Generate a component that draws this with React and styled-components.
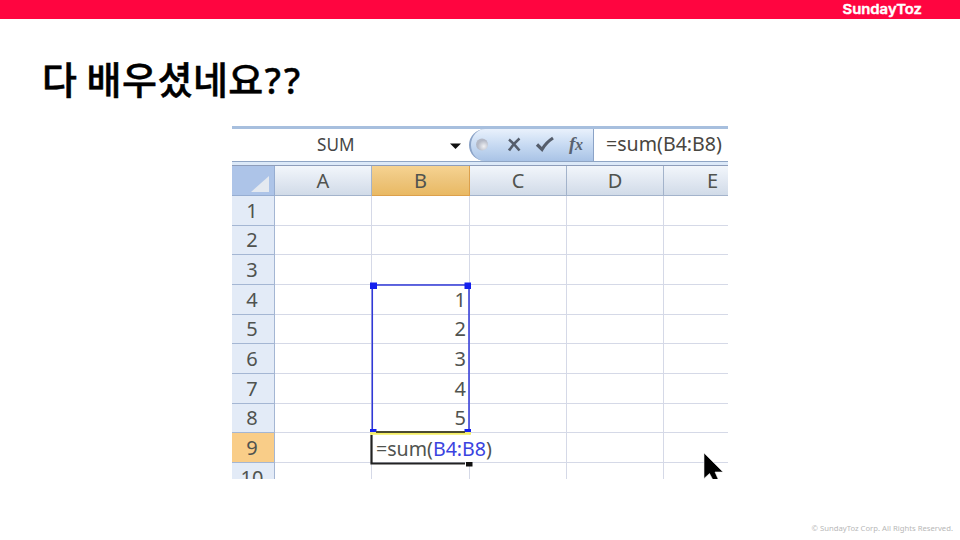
import React from "react";
import styled, { createGlobalStyle } from "styled-components";

const GlobalStyle = createGlobalStyle`
  * { box-sizing: border-box; }
  body { margin: 0; background: #fff; }
`;

const Slide = styled.main`
  width: 960px;
  height: 540px;
  overflow: hidden;
  display: flex;
  flex-direction: column;
  background: #fff;
  font-family: "Noto Sans", "Noto Sans CJK KR", sans-serif;
`;

const Banner = styled.header`
  flex: none;
  height: 19px;
  background: #ff0540;
  display: flex;
  justify-content: flex-end;
  padding-right: 36px;
`;

const Title = styled.h1`
  flex: none;
  margin: 0;
  height: 107px;
  padding: 31px 0 0 42px;
  font: 500 38px/56px "Noto Sans CJK KR", sans-serif;
  color: #000;
  white-space: pre;
`;

const Hangul = styled.span`
  letter-spacing: 0.5px;
  -webkit-text-stroke: 0.5px #000;
`;

const Marks = styled.span`
  font: 500 36px/56px "Noto Sans", sans-serif;
  letter-spacing: 3px;
  margin-left: 1px;
  -webkit-text-stroke: 0.5px #000;
`;

const Figure = styled.section`
  flex: none;
  width: 496px;
  height: 353px;
  margin-left: 232px;
  overflow: hidden;
  position: relative;
  color: #50534f;
`;

const FormulaBar = styled.div`
  display: flex;
  height: 36px;
  border-top: 3px solid #a7bfde;
  border-bottom: 1px solid #8fa5c4;
  background: #fff;
`;

const NameBox = styled.div`
  width: 237px;
  display: flex;
  align-items: center;
  justify-content: space-between;
  padding: 0 8px 3px 85px;
  font-size: 18px;
  color: #454545;
`;

const Arrow = styled.svg`
  margin-top: 4px;
`;

const Buttons = styled.div`
  width: 125px;
  border: 1px solid #8ba3c7;
  border-width: 0 1px 0 2px;
  border-radius: 16px 0 0 16px;
  background: linear-gradient(#e9f1fc, #c7daf2 50%, #a9c3e6);
`;

const Formula = styled.div`
  padding-left: 12px;
  font-size: 19.5px;
  line-height: 30px;
  color: #48453f;
  white-space: nowrap;
`;

const Fit = styled.span`
  display: inline-block;
  transform-origin: 0 50%;
  transform: scaleX(${(p) => p.$x});
`;

const Divider = styled.div`
  height: 4px;
  background: #dce9f8;
  border-bottom: 1px solid #8e9dba;
`;

const Sheet = styled.div`
  display: grid;
  grid-template-columns: 43px 97px 98px 97px 97px 98px;
  grid-template-rows: 30px 30px 29px 30px 30px 29px 30px 30px 29px 30px 30px;
`;

const Cell = styled.div`
  border-right: 1px solid #d5d9e7;
  border-bottom: 1px solid #d5d9e7;
  display: flex;
  align-items: center;
  justify-content: flex-end;
  padding: 0 3px 0 0;
  font-size: 20px;
  line-height: 28px;
  white-space: nowrap;
`;

const ColumnHead = styled(Cell)`
  justify-content: center;
  padding: 1px 0 0;
  font-size: 20px;
  border-color: ${(p) => (p.$active ? "#dca04c" : "#a3b3cb")};
  background: ${(p) =>
    p.$active
      ? "linear-gradient(#f6d391, #eec67e 45%, #e9b963)"
      : "linear-gradient(#f2f6fb, #e0e7f1 55%, #d1dbe8)"};
`;

const RowHead = styled(Cell)`
  justify-content: center;
  padding: 0 2px 0 0;
  border-color: #a4b6d3;
  background: ${(p) => (p.$active ? "#f9cd88" : "#e3ebf7")};
`;

const Corner = styled(Cell)`
  padding: 0 5px 3px 0;
  align-items: flex-end;
  background: #adc4e8;
  border-color: #96add1;
`;

const RangeBox = styled.svg`
  position: absolute;
  left: 0;
  top: 0;
  pointer-events: none;
`;

const Editing = styled.div`
  position: absolute;
  left: 141px;
  top: 309px;
  width: 122px;
  padding-left: 3px;
  background: #fff;
  font-size: 19.5px;
  line-height: 27px;
  white-space: nowrap;
`;

const Ref = styled.span`
  color: #3a42e0;
`;

const Copyright = styled.footer`
  flex: none;
  height: 61px;
  padding: 44px 7px 0 0;
  text-align: right;
  font-size: 7.7px;
  line-height: 11px;
  color: #b8b8b8;
`;

const Logo = () => (
  <svg width="84" height="19" role="img" aria-label="SundayToz">
    <text
      x="2.500" y="14" textLength="79.500" lengthAdjust="spacingAndGlyphs"
      fontFamily="Inter, sans-serif" fontWeight="600" fontSize="13.500"
      fill="#fff" stroke="#fff" strokeWidth="0.400" strokeLinejoin="round"
    >
      SundayToz
    </text>
  </svg>
);

const FormulaIcons = () => (
  <svg width="122" height="32" viewBox="471 129 122 32">
    <defs>
      <radialGradient id="knob" cx="65%" cy="65%">
        <stop offset="0" stopColor="#f0f1f4" />
        <stop offset="1" stopColor="#b4b9c6" />
      </radialGradient>
    </defs>
    <circle cx="482" cy="144.5" r="6" fill="url(#knob)" />
    <path d="M509 139.500q5 4 10.500 11M519.500 138.500q-6 5-10.500 12" fill="none" stroke="#555d6b" strokeWidth="2.600" />
    <path d="M537 144.500l5 5q4-7 11-11.500" fill="none" stroke="#555d6b" strokeWidth="3.200" />
    <text x="569" y="149.500" fontFamily="Liberation Serif, serif" fontStyle="italic" fontWeight="700" fontSize="19" fill="#5a6270">f</text>
    <text x="575" y="150" fontFamily="Liberation Serif, serif" fontStyle="italic" fontWeight="700" fontSize="16" fill="#5a6270">x</text>
  </svg>
);

const columns = ["A", "B", "C", "D", "E"];
const values = { 4: 1, 5: 2, 6: 3, 7: 4, 8: 5 };
const rows = Array.from({ length: 10 }, (_, i) => i + 1);

export default function App() {
  return (
    <>
      <GlobalStyle />
      <Slide>
        <Banner><Logo /></Banner>
        <Title><Hangul>다 배우셨네요</Hangul><Marks>??</Marks></Title>
        <Figure>
          <FormulaBar>
            <NameBox>
              <Fit $x={0.95}>SUM</Fit>
              <Arrow width="11" height="6"><path d="M0 .5h11L5.500 6z" fill="#111" /></Arrow>
            </NameBox>
            <Buttons><FormulaIcons /></Buttons>
            <Formula><Fit $x={1.005}>=sum(B4:B8)</Fit></Formula>
          </FormulaBar>
          <Divider />
          <Sheet>
            <Corner><svg width="18" height="16"><path d="M18 0v16H0z" fill="#e4e9f0" /></svg></Corner>
            {columns.map((c) => <ColumnHead key={c} $active={c === "B"}>{c}</ColumnHead>)}
            {rows.map((r) => (
              <React.Fragment key={r}>
                <RowHead $active={r === 9}>{r}</RowHead>
                {columns.map((c) => <Cell key={c}>{c === "B" ? values[r] : null}</Cell>)}
              </React.Fragment>
            ))}
          </Sheet>
          <Editing><Fit $x={1.005}>=sum(<Ref>B4:B8</Ref>)</Fit></Editing>
          <RangeBox width="496" height="353" viewBox="232 126 496 353">
            <path d="M372.300 432V285H469V432" fill="none" stroke="#3038d8" strokeWidth="1.500" />
            <path d="M370 282.500h7v6.500h-7zM464.500 282.500h6.500v6.500h-6.500zM370 429h6.500v3H370zM464.500 429h6.500v3h-6.500z" fill="#1420ee" />
            <path d="M370 433.500h101" stroke="#f4ee62" strokeWidth="2.500" />
            <path d="M376 432h89" stroke="#4b4b30" strokeWidth="2" />
            <path d="M371.500 435v28.500H465" fill="none" stroke="#222" strokeWidth="2.200" />
            <path d="M466 462h6.500v4.500H466z" fill="#111" />
            <path d="M704 453v25.500l5.500-5 3.500 6.500h5.500l-3.500-8h8z" fill="#000" stroke="#eee" strokeWidth="0.600" />
          </RangeBox>
        </Figure>
        <Copyright>© SundayToz Corp. All Rights Reserved.</Copyright>
      </Slide>
    </>
  );
}
